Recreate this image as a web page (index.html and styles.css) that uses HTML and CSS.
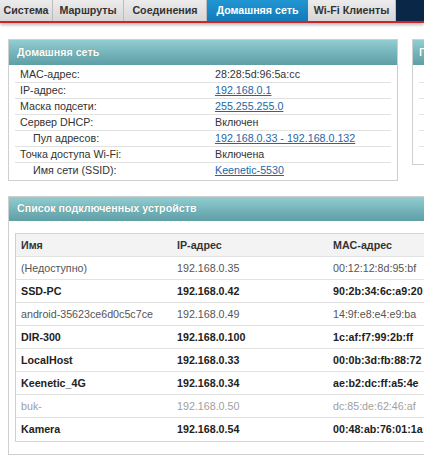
FILE: index.html
```html
<!DOCTYPE html>
<html lang="ru">
<head>
<meta charset="utf-8">
<title>Домашняя сеть</title>
<link rel="stylesheet" href="styles.css">
</head>
<body>
<div class="page">
  <nav class="tabs">
    <div class="tab t1">Система</div>
    <div class="tab t2">Маршруты</div>
    <div class="tab t3">Соединения</div>
    <div class="tab t4 active">Домашняя сеть</div>
    <div class="tab t5">Wi-Fi Клиенты</div>
  </nav>

  <div class="top">
    <section class="panel home">
      <header class="panel-head">Домашняя сеть</header>
      <div class="panel-body">
        <div class="row"><span class="lbl">MAC-адрес:</span><span class="val">28:28:5d:96:5a:cc</span></div>
        <div class="row"><span class="lbl">IP-адрес:</span><a class="val link">192.168.0.1</a></div>
        <div class="row"><span class="lbl">Маска подсети:</span><a class="val link">255.255.255.0</a></div>
        <div class="row"><span class="lbl">Сервер DHCP:</span><span class="val">Включен</span></div>
        <div class="row"><span class="lbl sub">Пул адресов:</span><a class="val link">192.168.0.33 - 192.168.0.132</a></div>
        <div class="row"><span class="lbl">Точка доступа Wi-Fi:</span><span class="val">Включена</span></div>
        <div class="row"><span class="lbl sub">Имя сети (SSID):</span><a class="val link">Keenetic-5530</a></div>
      </div>
    </section>
    <section class="panel side">
      <header class="panel-head">П</header>
      <div class="panel-body">
        <div class="row"></div>
        <div class="row"></div>
        <div class="row"></div>
        <div class="row"></div>
        <div class="row"></div>
        <div class="row"></div>
      </div>
    </section>
  </div>

  <section class="panel list">
    <header class="panel-head">Список подключенных устройств</header>
    <div class="list-body">
      <div class="table">
        <div class="tr th"><span>Имя</span><span>IP-адрес</span><span>MAC-адрес</span></div>
        <div class="tr n"><span>(Недоступно)</span><span>192.168.0.35</span><span>00:12:12:8d:95:bf</span></div>
        <div class="tr b"><span>SSD-PC</span><span>192.168.0.42</span><span>90:2b:34:6c:a9:20</span></div>
        <div class="tr n"><span>android-35623ce6d0c5c7ce</span><span>192.168.0.49</span><span>14:9f:e8:e4:e9:ba</span></div>
        <div class="tr b"><span>DIR-300</span><span>192.168.0.100</span><span>1c:af:f7:99:2b:ff</span></div>
        <div class="tr b"><span>LocalHost</span><span>192.168.0.33</span><span>00:0b:3d:fb:88:72</span></div>
        <div class="tr b"><span>Keenetic_4G</span><span>192.168.0.34</span><span>ae:b2:dc:ff:a5:4e</span></div>
        <div class="tr g"><span>buk-</span><span>192.168.0.50</span><span>dc:85:de:62:46:af</span></div>
        <div class="tr b"><span>Kamera</span><span>192.168.0.54</span><span>00:48:ab:76:01:1a</span></div>
      </div>
    </div>
  </section>
</div>
</body>
</html>
```

FILE: styles.css
```css
* { box-sizing: border-box; }
html, body { margin: 0; padding: 0; background: #fff; }
body {
  font-family: "Liberation Sans", Arial, sans-serif;
  font-size: 10.7px;
  color: #333;
  overflow: hidden;
  width: 424px;
  height: 458px;
}
.page { width: 424px; overflow: hidden; }

/* tabs */
.tabs {
  display: flex;
  height: 23px;
  background: #0b2748;
  border-bottom: 2px solid #c8262b;
  box-shadow: 0 2px 3px rgba(0,0,0,0.28);
  width: 424px;
}
.tab {
  height: 21px;
  line-height: 21px;
  font-weight: bold;
  color: #333;
  text-align: center;
  background: linear-gradient(#ececec, #d6d6d6);
  border-right: 1px solid #bdbdbd;
  white-space: nowrap;
}
.t1 { width: 53px; }
.t2 { width: 71px; }
.t3 { width: 83px; }
.t4 { width: 101px; }
.t5 { width: 88px; }
.tab.active {
  background: linear-gradient(#2196d3, #137ab8);
  color: #fff;
  border-right: none;
}

/* panels */
.top {
  display: flex;
  gap: 14px;
  padding: 16px 0 0 8px;
  align-items: flex-start;
}
.panel {
  border: 1px solid #cfcfcf;
  background: #fff;
  flex: none;
}
.panel-head {
  height: 25px;
  line-height: 24px;
  padding-left: 8px;
  color: #fff;
  font-weight: bold;
  background: linear-gradient(#92cdd1 0%, #78b8bd 45%, #5e9ea5 100%);
  text-shadow: 0 0 1px rgba(0,0,0,0.25);
  white-space: nowrap;
}
.home { width: 390px; }
.side { width: 40px; }
.side .panel-head { padding-left: 6px; }
.panel-body { padding: 2px 6px 1px; }
.row {
  display: flex;
  height: 16px;
  line-height: 15px;
  border-bottom: 1px solid #e2e2e2;
}
.row:last-child { border-bottom: none; }
.lbl { width: 200px; padding-left: 5px; flex: none; }
.lbl.sub { padding-left: 18px; }
.val { color: #333; white-space: nowrap; }
.val.link { color: #2366a6; text-decoration: underline; }

/* list */
.list {
  margin: 15px 0 0 8px;
  width: 440px;
}
.list .panel-head { height: 24px; line-height: 23px; }
.list-body { padding: 12px 0 12px 6px; }
.table {
  border-left: 1px solid #cfcfcf;
  border-top: 1px solid #d4d4d4;
  border-bottom: 1px solid #d4d4d4;
  width: 430px;
}
.tr {
  display: grid;
  grid-template-columns: 156px 156px 156px;
  height: 23px;
  line-height: 22px;
  border-bottom: 1px solid #e2e2e2;
}
.tr:last-child { border-bottom: none; }
.tr span { padding-left: 5px; white-space: nowrap; }
.th {
  height: 23px;
  background: #f3f3f3;
  font-weight: bold;
  color: #333;
}
.tr.n { color: #555; }
.tr.b { font-weight: bold; color: #222; }
.tr.g { color: #a0a0a0; }
```
